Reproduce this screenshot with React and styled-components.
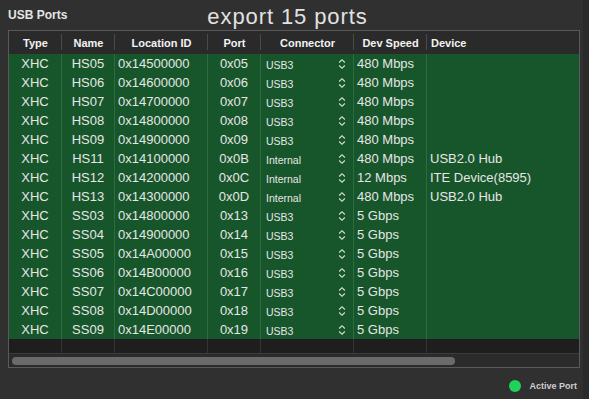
import React from 'react';
import styled, { createGlobalStyle } from 'styled-components';

const GlobalStyle = createGlobalStyle`
  html, body {
    margin: 0;
    padding: 0;
    background: #303030;
  }
  body {
    font-family: "Liberation Sans", Arial, sans-serif;
  }
`;

const Window = styled.div`
  width: 589px;
  height: 399px;
  display: flex;
  background: #303030;
  overflow: hidden;
`;

const Main = styled.div`
  width: 583px;
  display: flex;
  flex-direction: column;
  padding-left: 8px;
  box-sizing: border-box;
`;

const SideStrip = styled.div`
  flex: 1;
  background: #2a2a2a;
`;

const TitleRow = styled.div`
  height: 30px;
  display: flex;
  align-items: flex-start;
`;

const PanelTitle = styled.div`
  font-size: 12px;
  font-weight: bold;
  color: #e4e4e4;
  margin-top: 8px;
`;

const Headline = styled.div`
  font-size: 22px;
  letter-spacing: 0.9px;
  color: #e2e2e2;
  margin-left: 140px;
  margin-top: 4px;
`;

const Frame = styled.div`
  width: 572px;
  height: 338px;
  border: 1px solid #5a5a5a;
  box-sizing: border-box;
  background: #2b2b2b;
  display: flex;
  flex-direction: column;
`;

const COLUMNS = '53px 53px 93px 53px 93px 73px 1fr';

const HeaderRow = styled.div`
  display: grid;
  grid-template-columns: ${COLUMNS};
  height: 23px;
  background: #2a2a2a;
`;

const HeadCell = styled.div`
  display: flex;
  align-items: center;
  justify-content: ${(p) => (p.$left ? 'flex-start' : 'center')};
  padding-left: ${(p) => (p.$left ? '4px' : '0')};
  font-size: 11px;
  font-weight: bold;
  color: #f2f2f2;
  position: relative;

  &:not(:last-child)::after {
    content: '';
    position: absolute;
    right: 0;
    top: 3px;
    bottom: 4px;
    width: 1px;
    background: #4a4a4a;
  }
`;

const Row = styled.div`
  display: grid;
  grid-template-columns: ${COLUMNS};
  height: ${(p) => (p.$empty ? '14px' : '19px')};
  background: ${(p) => (p.$empty ? '#1e1e1e' : '#17562b')};
`;

const Cell = styled.div`
  display: flex;
  align-items: center;
  justify-content: ${(p) => (p.$align === 'center' ? 'center' : 'flex-start')};
  padding-left: ${(p) => (p.$align === 'center' ? '0' : '3px')};
  font-size: ${(p) => (p.$small ? '10.5px' : '13px')};
  padding-top: ${(p) => (p.$small ? '2px' : '0')};
  color: #e6e6e6;
  white-space: nowrap;
  border-right: ${(p) => (p.$last ? 'none' : p.$empty ? '1px solid #333' : '1px solid #2e6b3d')};
  box-sizing: border-box;
`;

const ConnectorCell = styled(Cell)`
  justify-content: space-between;
  padding-right: 7px;
  padding-left: 5px;
`;

const Stepper = styled.svg`
  width: 8px;
  height: 12px;
  margin-top: -2px;
`;

const ScrollArea = styled.div`
  height: 14px;
  border-top: 1px solid #3c3c3c;
  background: #2b2b2b;
  padding: 3px 0 0 3px;
  box-sizing: border-box;
`;

const Thumb = styled.div`
  width: 443px;
  height: 8px;
  border-radius: 4px;
  background: #6b6b6b;
`;

const Legend = styled.div`
  display: flex;
  align-items: center;
  justify-content: flex-end;
  gap: 8px;
  padding-right: 6px;
  margin-top: 12px;
`;

const Dot = styled.div`
  width: 12px;
  height: 12px;
  border-radius: 50%;
  background: #1fd25a;
`;

const LegendText = styled.span`
  font-size: 9px;
  font-weight: bold;
  color: #cfcfcf;
`;

const ports = [
  ['HS05', '0x14500000', '0x05', 'USB3', '480 Mbps', ''],
  ['HS06', '0x14600000', '0x06', 'USB3', '480 Mbps', ''],
  ['HS07', '0x14700000', '0x07', 'USB3', '480 Mbps', ''],
  ['HS08', '0x14800000', '0x08', 'USB3', '480 Mbps', ''],
  ['HS09', '0x14900000', '0x09', 'USB3', '480 Mbps', ''],
  ['HS11', '0x14100000', '0x0B', 'Internal', '480 Mbps', 'USB2.0 Hub'],
  ['HS12', '0x14200000', '0x0C', 'Internal', '12 Mbps', 'ITE Device(8595)'],
  ['HS13', '0x14300000', '0x0D', 'Internal', '480 Mbps', 'USB2.0 Hub'],
  ['SS03', '0x14800000', '0x13', 'USB3', '5 Gbps', ''],
  ['SS04', '0x14900000', '0x14', 'USB3', '5 Gbps', ''],
  ['SS05', '0x14A00000', '0x15', 'USB3', '5 Gbps', ''],
  ['SS06', '0x14B00000', '0x16', 'USB3', '5 Gbps', ''],
  ['SS07', '0x14C00000', '0x17', 'USB3', '5 Gbps', ''],
  ['SS08', '0x14D00000', '0x18', 'USB3', '5 Gbps', ''],
  ['SS09', '0x14E00000', '0x19', 'USB3', '5 Gbps', ''],
];

function StepIcon() {
  return (
    <Stepper viewBox="0 0 8 12">
      <path d="M1.2 4.5 L4 1.7 L6.8 4.5" fill="none" stroke="#dde5de" strokeWidth="1.1" />
      <path d="M1.2 7.5 L4 10.3 L6.8 7.5" fill="none" stroke="#dde5de" strokeWidth="1.1" />
    </Stepper>
  );
}

function App() {
  return (
    <Window>
      <GlobalStyle />
      <Main>
        <TitleRow>
          <PanelTitle>USB Ports</PanelTitle>
          <Headline>export 15 ports</Headline>
        </TitleRow>
        <Frame>
          <HeaderRow>
            <HeadCell>Type</HeadCell>
            <HeadCell>Name</HeadCell>
            <HeadCell>Location ID</HeadCell>
            <HeadCell>Port</HeadCell>
            <HeadCell>Connector</HeadCell>
            <HeadCell>Dev Speed</HeadCell>
            <HeadCell $left>Device</HeadCell>
          </HeaderRow>
          {ports.map((p) => (
            <Row key={p[0]}>
              <Cell $align="center">XHC</Cell>
              <Cell $align="center">{p[0]}</Cell>
              <Cell>{p[1]}</Cell>
              <Cell $align="center">{p[2]}</Cell>
              <ConnectorCell $small>
                {p[3]}
                <StepIcon />
              </ConnectorCell>
              <Cell>{p[4]}</Cell>
              <Cell $last>{p[5]}</Cell>
            </Row>
          ))}
          <Row $empty>
            <Cell $empty />
            <Cell $empty />
            <Cell $empty />
            <Cell $empty />
            <Cell $empty />
            <Cell $empty />
            <Cell $empty $last />
          </Row>
          <ScrollArea>
            <Thumb />
          </ScrollArea>
        </Frame>
        <Legend>
          <Dot />
          <LegendText>Active Port</LegendText>
        </Legend>
      </Main>
      <SideStrip />
    </Window>
  );
}

export default App;
